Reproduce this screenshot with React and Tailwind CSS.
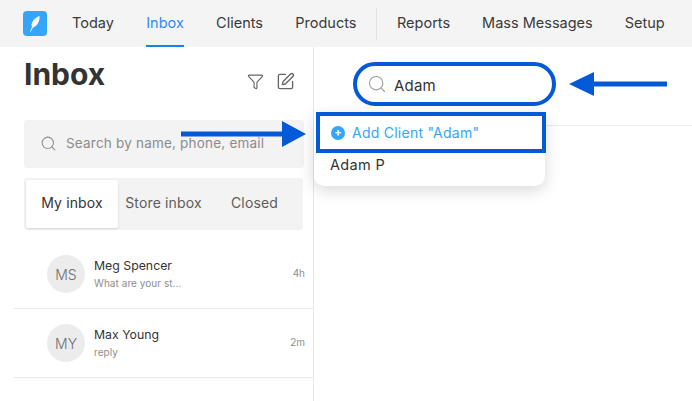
import { Filter, Search, SquarePen } from 'lucide-react'

const navLeft = ['Today', 'Inbox', 'Clients', 'Products']
const navRight = ['Reports', 'Mass Messages', 'Setup']

const threads = [
  { initials: 'MS', name: 'Meg Spencer', preview: 'What are your st...', time: '4h' },
  { initials: 'MY', name: 'Max Young', preview: 'reply', time: '2m' },
]

function NavItem({ label }) {
  const active = label === 'Inbox'
  return (
    <div className={`flex h-[47px] items-center border-b-[2px] pt-[1px] ${active ? 'border-[#1a7ff0] text-[#2f8bf5]' : 'border-transparent text-[#3a3a3a]'}`}>
      {label}
    </div>
  )
}

function Arrow({ className, flip }) {
  return (
    <svg className={className} viewBox="0 0 125 26" fill="#0459d6">
      {flip
        ? <path d="M0 13 L25 1 V10.5 H98 V15.5 H25 V25 Z" />
        : <path d="M125 13 L101 0 V10.5 H0 V15.5 H101 V26 Z" />}
    </svg>
  )
}

export default function App() {
  return (
    <div className="relative h-[401px] w-[692px] overflow-hidden bg-white font-['Inter',sans-serif]">
      <div className="flex h-[47px] items-center bg-[#f4f4f4] pl-[23px] text-[14.5px]">
        <div className="mr-[25px] flex h-[25px] w-[24px] items-center justify-center rounded-[4px] bg-[#33a6fb]">
          <svg width="14" height="18" viewBox="0 0 14 18" fill="white">
            <path d="M2 17 C3 14 3.5 13 4 12 C2.5 9 5 3.5 11.5 1 C12 6 9.5 11 5 12.5 C4 14 3 16 2.4 17.2 Z" />
          </svg>
        </div>
        <div className="flex gap-[32.3px]">
          {navLeft.map(label => <NavItem key={label} label={label} />)}
        </div>
        <div className="ml-[19.5px] mr-[20px] h-[32px] w-px bg-[#e2e2e2]" />
        <div className="flex gap-[32px]">
          {navRight.map(label => <NavItem key={label} label={label} />)}
        </div>
      </div>

      <div className="flex h-[354px]">
        <div className="w-[314px] shrink-0 border-r border-[#e8e8e8] pl-[14px]">
          <div className="flex h-[73px] items-start pl-[10px] pr-[18px]">
            <h1 className="mt-[6px] text-[30px] leading-[42px] font-bold text-[#333333]">Inbox</h1>
            <div className="mt-[25px] ml-auto flex items-center gap-[12px] text-[#666666]">
              <Filter size={17} strokeWidth={1.6} />
              <SquarePen size={19} strokeWidth={1.7} />
            </div>
          </div>

          <div className="ml-[10px] flex h-[48px] w-[280px] items-center gap-[9px] rounded-[3px] bg-[#f3f3f3] pb-[1px] pl-[16px] text-[13.5px] tracking-[0.2px] text-[#8b8b8b]">
            <Search size={17} strokeWidth={1.5} className="text-[#8f8f8f]" />
            Search by name, phone, email
          </div>

          <div className="mt-[10px] ml-[10px] flex h-[52px] w-[279px] items-center rounded-[3px] bg-[#f3f3f3] pl-[2px] text-[14px] tracking-[0.15px] text-[#5c5c5c]">
            <div className="flex h-[48px] w-[92px] items-center justify-center rounded-[2px] bg-white pb-[3px] text-[#333333] shadow-sm">My inbox</div>
            <div className="mb-[3px] flex w-[91px] justify-center">Store inbox</div>
            <div className="mb-[3px] flex w-[91px] justify-center">Closed</div>
          </div>

          <div className="mt-[10px]">
            {threads.map(t => (
              <div key={t.name} className="flex h-[69px] items-center border-b border-[#e9e9e9] pr-[8px] pl-[33px]">
                <div className="flex h-[38px] w-[38px] shrink-0 items-center justify-center rounded-full bg-[#ececec] text-[14px] font-light text-[#6e6e6e]">
                  {t.initials}
                </div>
                <div className="ml-[9px] pt-[1px]">
                  <div className="text-[12.3px] leading-[18px] text-[#333333]">{t.name}</div>
                  <div className="text-[10px] leading-[17px] tracking-[0.05px] text-[#8e8e8e]">{t.preview}</div>
                </div>
                <div className="mb-[2px] ml-auto text-[10px] text-[#8e8e8e]">{t.time}</div>
              </div>
            ))}
          </div>
        </div>

        <div className="flex-1">
          <div className="h-[79px] border-b border-[#ececec] pt-[15px] pl-[39px]">
            <div className="flex h-[44px] w-[203px] items-center gap-[7px] rounded-full border-[4px] border-[#0459d6] pl-[10px] text-[15px] tracking-[0.2px] text-[#333333]">
              <Search size={20} strokeWidth={1.3} className="text-[#9a9a9a]" />
              <span className="mt-[4px]">Adam</span>
            </div>
          </div>
        </div>
      </div>

      <div className="absolute top-[113px] left-[314px] h-[73px] w-[231px] rounded-b-[10px] bg-white shadow-[0_4px_16px_rgba(0,0,0,0.16)]">
        <div className="absolute top-[-1px] left-[2px] flex h-[41px] w-[230px] items-center gap-[7px] border-[4px] border-[#0459d6] pl-[11px] text-[14px] tracking-[0.25px] text-[#33a6fb]">
          <span className="flex h-[14px] w-[14px] items-center justify-center rounded-full bg-[#33a6fb] text-[11px] leading-none font-bold text-white">+</span>
          Add Client "Adam"
        </div>
        <div className="absolute top-[42px] left-[16px] text-[14.5px] leading-[20px] tracking-[0.35px] text-[#333333]">Adam P</div>
      </div>

      <Arrow className="absolute top-[121px] left-[181px] h-[26px] w-[125px]" />
      <Arrow flip className="absolute top-[71px] left-[569px] h-[26px] w-[125px]" />
    </div>
  )
}
